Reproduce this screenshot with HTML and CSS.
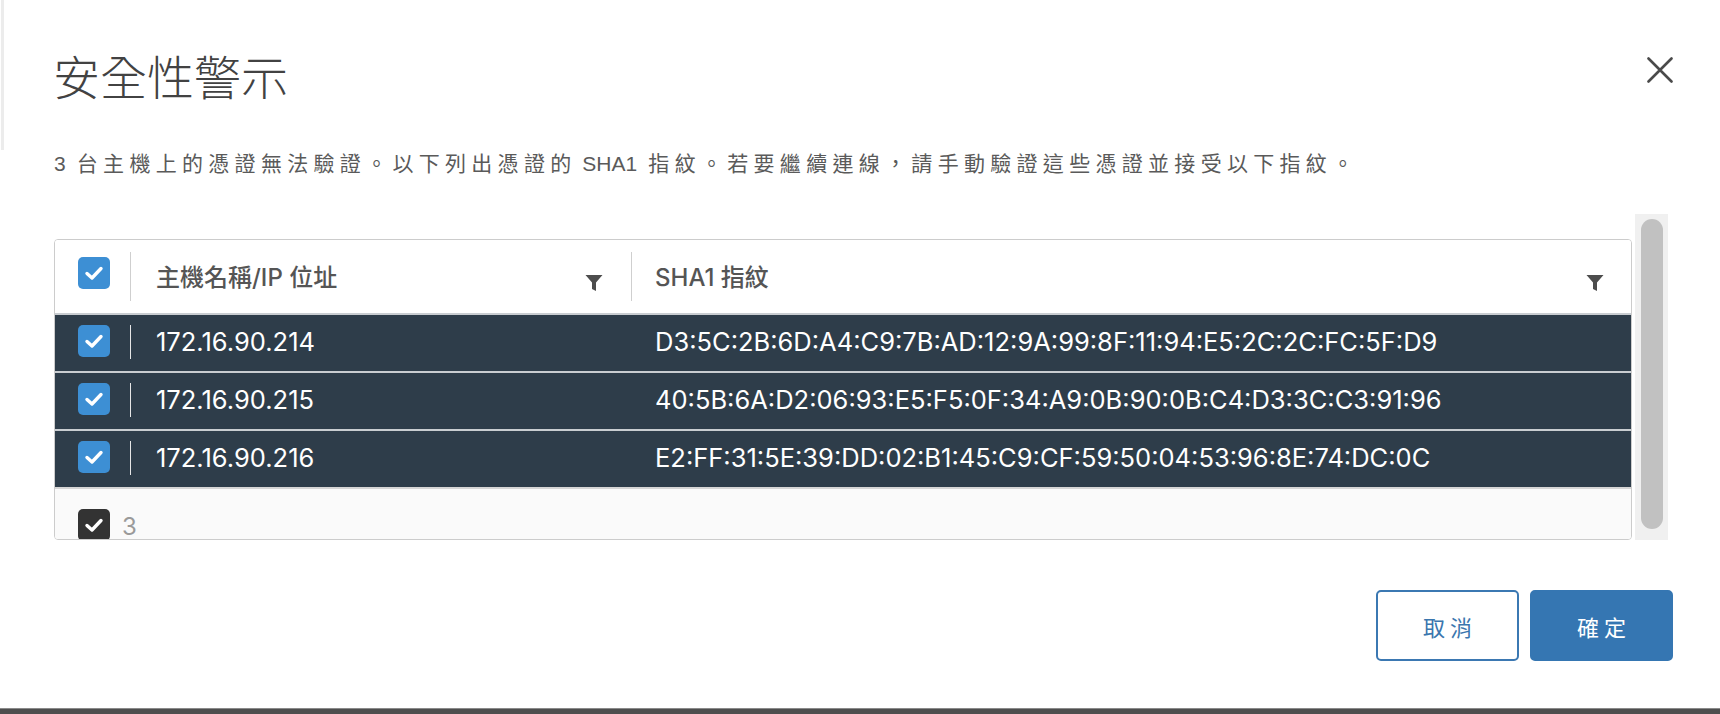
FILE: index.html
```html
<!DOCTYPE html>
<html lang="zh-Hant">
<head>
<meta charset="utf-8">
<title>安全性警示</title>
<link rel="stylesheet" href="styles.css">
</head>
<body>
<div class="modal">
  <div class="modal-header">
    <h1 class="modal-title">安全性警示</h1>
    <button class="close" aria-label="關閉">
      <svg width="26" height="26" viewBox="0 0 26 26"><path d="M1.5 1.5 L24.5 24.5 M24.5 1.5 L1.5 24.5" stroke="#4a4a4a" stroke-width="2.6" stroke-linecap="round" fill="none"/></svg>
    </button>
  </div>
  <p class="modal-desc"><span class="lat">3</span> 台主機上的憑證無法驗證。以下列出憑證的<span class="lat"> SHA1</span> 指紋。若要繼續連線，請手動驗證這些憑證並接受以下指紋。</p>

  <div class="scroll-area">
    <div class="scroll-content">
      <div class="grid">
        <div class="grid-head">
          <div class="cell-select"><span class="cb cb-blue"><svg viewBox="0 0 32 32"><path d="M9 16.5 L14 21 L23 11.5" stroke="#fff" stroke-width="3.4" fill="none" stroke-linecap="round" stroke-linejoin="round"/></svg></span></div>
          <div class="hcell col-host"><span class="htext">主機名稱/IP 位址</span><svg class="filter" viewBox="0 0 18 18"><path d="M0.5 1 H17.5 L11 8.5 V17 L7 15 V8.5 Z" fill="#4d4d4d"/></svg></div>
          <div class="hcell col-hash"><span class="htext">SHA1 指紋</span><svg class="filter" viewBox="0 0 18 18"><path d="M0.5 1 H17.5 L11 8.5 V17 L7 15 V8.5 Z" fill="#4d4d4d"/></svg></div>
        </div>
        <div class="grid-row">
          <div class="cell-select"><span class="cb cb-blue"><svg viewBox="0 0 32 32"><path d="M9 16.5 L14 21 L23 11.5" stroke="#fff" stroke-width="3.4" fill="none" stroke-linecap="round" stroke-linejoin="round"/></svg></span></div>
          <div class="rcell col-host">172.16.90.214</div>
          <div class="rcell col-hash nosep">D3:5C:2B:6D:A4:C9:7B:AD:12:9A:99:8F:11:94:E5:2C:2C:FC:5F:D9</div>
        </div>
        <div class="grid-row">
          <div class="cell-select"><span class="cb cb-blue"><svg viewBox="0 0 32 32"><path d="M9 16.5 L14 21 L23 11.5" stroke="#fff" stroke-width="3.4" fill="none" stroke-linecap="round" stroke-linejoin="round"/></svg></span></div>
          <div class="rcell col-host">172.16.90.215</div>
          <div class="rcell col-hash nosep">40:5B:6A:D2:06:93:E5:F5:0F:34:A9:0B:90:0B:C4:D3:3C:C3:91:96</div>
        </div>
        <div class="grid-row">
          <div class="cell-select"><span class="cb cb-blue"><svg viewBox="0 0 32 32"><path d="M9 16.5 L14 21 L23 11.5" stroke="#fff" stroke-width="3.4" fill="none" stroke-linecap="round" stroke-linejoin="round"/></svg></span></div>
          <div class="rcell col-host">172.16.90.216</div>
          <div class="rcell col-hash nosep">E2:FF:31:5E:39:DD:02:B1:45:C9:CF:59:50:04:53:96:8E:74:DC:0C</div>
        </div>
        <div class="grid-foot">
          <span class="cb cb-dark"><svg viewBox="0 0 32 32"><path d="M9 16.5 L14 21 L23 11.5" stroke="#fff" stroke-width="3.4" fill="none" stroke-linecap="round" stroke-linejoin="round"/></svg></span>
          <span class="foot-count">3</span>
        </div>
      </div>
    </div>
    <div class="scroll-track"><div class="scroll-thumb"></div></div>
  </div>

  <div class="modal-footer">
    <button class="btn btn-outline">取消</button>
    <button class="btn btn-primary">確定</button>
  </div>
</div>
<div class="taskbar"></div>
</body>
</html>
```

FILE: styles.css
```css
html, body {
  margin: 0;
  padding: 0;
}
body {
  width: 1720px;
  height: 714px;
  overflow: hidden;
  display: flex;
  flex-direction: column;
  font-family: "Liberation Sans", "Noto Sans CJK TC", sans-serif;
  background: linear-gradient(#ececec, #ececec) 1px 0 / 3px 150px no-repeat, #ffffff;
}
.modal {
  flex: 1;
  padding: 46px 47px 0 54px;
  display: flex;
  flex-direction: column;
}
.modal-header {
  display: flex;
  justify-content: space-between;
  align-items: flex-start;
  height: 57px;
}
.modal-title {
  margin: 0 0 0 -1px;
  font-family: "Noto Sans CJK TC", sans-serif;
  font-weight: 300;
  font-size: 47px;
  line-height: 57px;
  color: #424242;
}
.close {
  border: 0;
  background: transparent;
  padding: 0;
  margin-top: 11px;
  width: 26px;
  height: 26px;
  display: block;
}
.close svg { display: block; }
.modal-desc {
  margin: 46px 0 0 0;
  font-family: "Liberation Sans", "Noto Sans CJK TC", sans-serif;
  font-size: 21px;
  line-height: 30px;
  letter-spacing: 5.3px;
  color: #5a5a5a;
}
.modal-desc .lat { letter-spacing: 0; }
.scroll-area {
  margin-top: 35px;
  height: 326px;
  display: flex;
  gap: 3px;
}
.scroll-content {
  width: 1578px;
  padding-top: 25px;
  overflow: hidden;
}
.scroll-track {
  width: 33px;
  background: #f0f0f0;
  display: flex;
  justify-content: center;
  padding: 5px 0 11px;
  box-sizing: border-box;
}
.scroll-thumb {
  width: 22px;
  background: #c1c1c1;
  border-radius: 11px;
}
.grid {
  height: 301px;
  box-sizing: border-box;
  border: 1px solid #cccccc;
  border-radius: 4px;
  overflow: hidden;
  font-family: Inter, "Noto Sans CJK TC", sans-serif;
}
.grid-head {
  display: flex;
  height: 73px;
  background: #ffffff;
  box-sizing: border-box;
}
.cell-select {
  width: 75px;
  flex: none;
  display: flex;
  align-items: center;
  padding-left: 23px;
  box-sizing: border-box;
}
.grid-head .cell-select { padding-bottom: 8px; }
.cb {
  width: 32px;
  height: 32px;
  border-radius: 5px;
  display: block;
  flex: none;
}
.cb svg { width: 32px; height: 32px; display: block; }
.cb-blue { background: #3d8fd4; }
.cb-dark { background: #333333; }
.hcell {
  display: flex;
  align-items: center;
  justify-content: space-between;
  margin: 12px 0;
  border-left: 1px solid #cfcfcf;
  box-sizing: border-box;
  font-size: 24px;
  font-weight: 500;
  color: #555555;
}
.htext { margin-bottom: 3px; }
.filter {
  width: 18px;
  height: 18px;
  margin-top: 12px;
  display: block;
}
.col-host {
  width: 501px;
  flex: none;
  padding: 0 28px 0 25px;
}
.col-hash {
  flex: 1;
  padding: 0 27px 0 23px;
}
.grid-row {
  display: flex;
  height: 58px;
  border-top: 2px solid #c9cdd1;
  background: #2e3d4a;
  box-sizing: border-box;
}
.grid-row .cell-select { padding-bottom: 5px; }
.rcell {
  display: flex;
  align-items: center;
  margin: 10px 0 12px;
  border-left: 1px solid #e6e6e6;
  box-sizing: border-box;
  font-size: 25.5px;
  color: #ffffff;
  padding-bottom: 1px;
  white-space: nowrap;
}
.rcell.nosep {
  border-left-color: transparent;
}
.grid-foot {
  border-top: 2px solid #d6d6d6;
  background: #fafafa;
  height: 80px;
  display: flex;
  align-items: flex-start;
  padding: 20px 0 0 23px;
  box-sizing: border-box;
  gap: 12px;
}
.foot-count {
  font-family: Inter, sans-serif;
  font-size: 24px;
  color: #9a9a9a;
  line-height: 32px;
  margin-top: 2px;
}
.modal-footer {
  display: flex;
  justify-content: flex-end;
  gap: 11px;
  margin-top: 50px;
}
.btn {
  width: 143px;
  height: 71px;
  border-radius: 5px;
  font-family: "Noto Sans CJK TC", sans-serif;
  font-size: 22px;
  letter-spacing: 5px;
  text-indent: 5px;
  box-sizing: border-box;
  cursor: pointer;
}
.btn-outline {
  background: #ffffff;
  border: 2px solid #3b78b2;
  color: #3a76ae;
}
.btn-primary {
  background: #3576b2;
  border: 2px solid #3576b2;
  color: #ffffff;
}
.taskbar {
  height: 5px;
  flex: none;
  background: #4e4e4e;
  border-top: 1px solid #8a8a8a;
}
```
